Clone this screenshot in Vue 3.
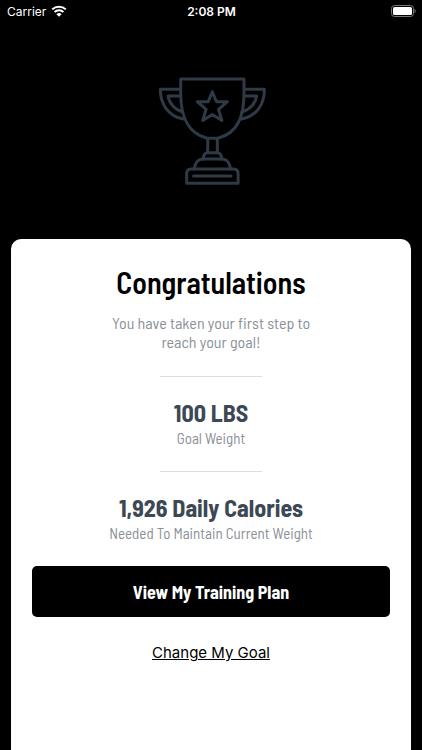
<script setup>
import { ref } from 'vue';

const title = ref('Congratulations')

const stats = ref([
    { value: '100 LBS', label: 'Goal Weight' },
    { value: '1,926 Daily Calories', label: 'Needed To Maintain Current Weight' },
])
</script>

<template>
<div class="goal-screen">

    <header class="status-bar">
        <div class="status-bar__carrier">
            <span>Carrier</span>
            <svg width="16" height="12" viewBox="0 0 16 12" aria-hidden="true">
                <path d="M1.2 4.400a9.800 9.800 0 0 1 13.600 0" />
                <path d="M3.600 7a6.300 6.300 0 0 1 8.800 0" />
                <path class="status-bar__dot" d="M8 11.800 5.400 9.200a3.700 3.700 0 0 1 5.200 0z" />
            </svg>
        </div>
        <div class="status-bar__time">2:08 PM</div>
        <div class="status-bar__battery">
            <svg width="25" height="12" viewBox="0 0 25 12" aria-hidden="true">
                <rect class="battery-shell" x=".5" y=".5" width="22" height="11" rx="3" />
                <rect class="battery-level" x="2" y="2" width="19" height="8" rx="1.600" />
                <path class="battery-cap" d="M23.500 4v4c1.600-.7 1.600-3.300 0-4z" />
            </svg>
        </div>
    </header>

    <div class="trophy">
        <svg width="108" height="109" viewBox="0 0 108 109" aria-hidden="true">
            <path d="M22.700 2H86v14C86 39 80 56 60 61.300H49C29 56 22.700 39 22.700 16z" />
            <path d="M22.500 12.300H2.300C2.300 27 10 39 25.300 42" />
            <path d="M22.700 19H10C11 26 16.500 32.500 24.700 35" />
            <path d="M86.200 12.300h20.200C106.400 27 99 39 83.400 42" />
            <path d="M86 19h12.700C97.700 26 92.200 32.500 84 35" />
            <path d="m54.300 14.700 4.100 10h11l-8.900 7.600 3.400 11.200-9.600-6-9.600 6 3.400-11.200-8.900-7.600h11z" />
            <path d="M49.700 61.300v14.200M59.300 61.300v14.200" />
            <path d="M45.300 82c0-4 1.500-6.300 4.400-6.300h9.400c2.900 0 4.400 2.300 4.400 6.300" />
            <path d="M36.200 92c.6-6 4-10 9-10h18.400c5 0 8.400 4 9 10" />
            <path d="M28.700 106.300V96.500q0-4.500 4.500-4.500h42.400q4.500 0 4.500 4.500v9.800z" />
            <path d="M35.500 99H73" />
        </svg>
    </div>

    <main class="card">
        <h1>{{ title }}</h1>
        <p class="card__intro">You have taken your first step to<br>reach your goal!</p>

        <section
            v-for="item in stats"
            :key="item.label"
            class="stat"
        >
            <h2>{{ item.value }}</h2>
            <p>{{ item.label }}</p>
        </section>

        <button type="button" class="card__plan">View My Training Plan</button>
        <a href="#" class="card__change">Change My Goal</a>
    </main>

</div>
</template>

<style>
body{
    margin: 0;
    background: #000;
}
</style>

<style scoped>
.goal-screen{
    display: flex;
    flex-direction: column;
    min-height: 100vh;
    background: #000;
    font-family: "Barlow Semi Condensed", "Roboto Condensed", "Liberation Sans Narrow", Roboto, sans-serif;
}

.status-bar{
    display: grid;
    grid-template-columns: 1fr auto 1fr;
    align-items: center;
    height: 22px;
    padding: 0 6px 0 7px;
    color: #fff;
    font-family: Inter, sans-serif;
    font-size: 12px;
}
.status-bar__carrier{
    display: flex;
    align-items: center;
    gap: 5px;
    & path{
        fill: none;
        stroke: #fff;
        stroke-width: 2;
    }
    & .status-bar__dot{
        fill: #fff;
        stroke: none;
    }
}
.status-bar__time{
    font-weight: 600;
}
.status-bar__battery{
    display: flex;
    justify-content: flex-end;
}
.battery-shell{
    fill: none;
    stroke: #777;
}
.battery-level{
    fill: #fff;
}
.battery-cap{
    fill: #777;
}

.trophy{
    display: flex;
    justify-content: center;
    padding: 55px 0 53px;
    & svg{
        margin-left: 2px;
    }
    & path{
        fill: none;
        stroke: #2e3a46;
        stroke-width: 3;
        stroke-linecap: round;
        stroke-linejoin: round;
    }
}

.card{
    flex: 1;
    display: flex;
    flex-direction: column;
    align-items: center;
    margin: 0 11px;
    padding: 23px 21px;
    border-radius: 10px 10px 0 0;
    background: #fff;
    text-align: center;
}
h1{
    margin: 0;
    font-size: 30px;
    line-height: 40px;
    font-weight: 600;
}
p{
    margin: 0;
    color: #8b9198;
    font-size: 15px;
    line-height: 19px;
}
.card__intro{
    margin: 11px 0 2px;
    font-size: 16px;
}
.stat{
    display: flex;
    flex-direction: column;
    align-items: center;
    margin-top: 23px;
    &::before{
        content: "";
        width: 102px;
        height: 1px;
        margin-bottom: 20px;
        background: #dedede;
    }
}
h2{
    margin: 0 0 1px;
    color: #3c4854;
    font-size: 24px;
    line-height: 31px;
    font-weight: 700;
}
.card__plan{
    align-self: stretch;
    height: 51px;
    margin-top: 23px;
    border: 0;
    border-radius: 5px;
    background: #000;
    color: #fff;
    font-family: inherit;
    font-size: 18px;
    font-weight: 700;
    cursor: pointer;
}
.card__change{
    margin-top: 26px;
    color: #000;
    font-family: Inter, sans-serif;
    font-size: 15px;
    line-height: 20px;
}
</style>
